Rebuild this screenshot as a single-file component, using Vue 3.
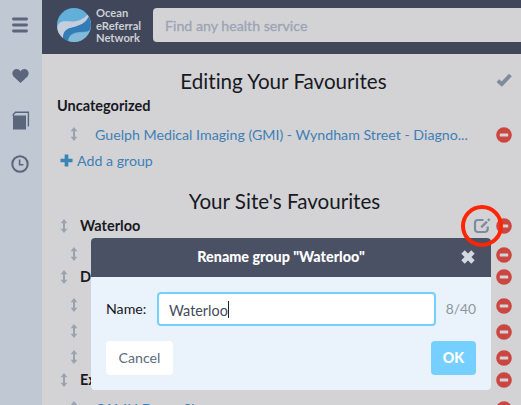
<script setup>
import { ref } from 'vue'

const name = ref('Waterloo')
const siteRows = [
  { type: 'group', label: 'Waterloo', edit: true },
  { type: 'item', label: '' },
  { type: 'group', label: 'Diagnostic Imaging' },
  { type: 'item', label: '' },
  { type: 'item', label: '' },
  { type: 'item', label: '' },
  { type: 'group', label: 'Example' },
  { type: 'item', label: 'CAMH Demo Site' },
]
</script>

<template>
  <div class="app">
    <nav class="sidebar">
      <svg class="nav-icon menu" viewBox="0 0 16 16"><path d="M1.5 2H14.5M1.5 8H14.5M1.5 14H14.5" stroke="currentColor" stroke-width="2.9" stroke-linecap="round" /></svg>
      <svg class="nav-icon heart" viewBox="0 0 18 16"><path d="M9 15.5 1.6 8.4C-.2 6.2.1 3.3 1.8 1.8 4-.2 7.4.5 9 3.2 10.6.5 14-.2 16.2 1.8 17.9 3.3 18.2 6.2 16.4 8.4Z" fill="currentColor" /></svg>
      <svg class="nav-icon book" viewBox="0 0 18 19"><path d="M1 4.5H14V18.5H1Z" fill="currentColor" /><path d="M1.3 5V3.5L3.5 1.2H16.4V15.5" fill="none" stroke="currentColor" stroke-width="1.4" /></svg>
      <svg class="nav-icon clock" viewBox="0 0 18 18"><circle cx="9" cy="9" r="7.7" fill="none" stroke="currentColor" stroke-width="2" /><path d="M8.6 4.5V9.7H12.5" fill="none" stroke="currentColor" stroke-width="1.6" /></svg>
    </nav>

    <div class="page">
      <header class="topbar">
        <svg class="logo" viewBox="0 0 34 34">
          <circle cx="17" cy="17" r="17" fill="#62afda" />
          <path d="M.2 19C3 11 9 14 17 13.5 24 13 28 9 30.5 6.800 34 11 34.5 17 33.2 22 28 17 21 19 15 20 9 21 6.5 24 6 30 2 27 .2 23 .2 19Z" fill="#c5cedd" />
          <path d="M6 30C6 23 10 20.5 15 19.5 23 17.5 29 15 31.5 8.5 34 12 34.5 17 33.4 21.5 30 25 25 23 19 24.5 13 26 11 29 11.5 33 9.5 32.4 7.5 31.5 6 30Z" fill="#337cb5" />
          <path d="M11.5 33C11.5 29 14 26.5 19 25.5 25 24 30 26 33.2 21.8 30 32 20 36 11.5 33Z" fill="#84b9d8" />
        </svg>
        <div class="brand">Ocean<br />eReferral<br />Network</div>
        <div class="search">Find any health service</div>
      </header>

      <main class="content">
        <div class="title-row">
          <h1>Editing Your Favourites</h1>
          <svg class="check" viewBox="0 0 16 14"><path d="M1.8 7.7 5.8 11 14.4 2" fill="none" stroke="#7f8b9c" stroke-width="3.9" /></svg>
        </div>
        <div class="row group uncategorized"><span class="label">Uncategorized</span></div>
        <div class="row item">
          <svg class="drag" viewBox="0 0 8 14"><path d="M4 2.5V11.5" stroke="currentColor" stroke-width="2" /><path d="M4 0 7.4 4.2H.6ZM4 14 .6 9.8H7.4Z" fill="currentColor" /></svg>
          <a class="link">Guelph Medical Imaging (GMI) - Wyndham Street - Diagno...</a>
          <svg class="remove" viewBox="0 0 16 16"><circle cx="8" cy="8" r="7.8" fill="#cb4640" /><rect x="3.8" y="6.4" width="8.4" height="3.2" rx=".6" fill="#d3d3d5" /></svg>
        </div>
        <div class="add">
          <svg class="plus" viewBox="0 0 14 14"><path d="M7 .5V13.5M.5 7H13.5" stroke="#3a85b8" stroke-width="4" /></svg>
          <a class="link">Add a group</a>
        </div>

        <h1 class="site-title">Your Site's Favourites</h1>
        <div v-for="(row, i) in siteRows" :key="i" class="row" :class="row.type">
          <svg class="drag" viewBox="0 0 8 14"><path d="M4 2.5V11.5" stroke="currentColor" stroke-width="2" /><path d="M4 0 7.4 4.2H.6ZM4 14 .6 9.8H7.4Z" fill="currentColor" /></svg>
          <span :class="row.type === 'item' ? 'link' : 'label'">{{ row.label }}</span>
          <span v-if="row.edit" class="edit">
            <svg viewBox="0 0 18 16"><path d="M10.5 2H5Q2 2 2 5V11Q2 14 5 14H11.5Q14.7 14 14.7 11V8.5" fill="none" stroke="#7f8b9c" stroke-width="2.2" /><path d="M8.2 9.4 14 3.7" stroke="#7f8b9c" stroke-width="2.4" /><path d="M15 2.6 16.6 1" stroke="#7f8b9c" stroke-width="2.4" /></svg>
            <span class="highlight"></span>
          </span>
          <svg class="remove" viewBox="0 0 16 16"><circle cx="8" cy="8" r="7.8" fill="#cb4640" /><rect x="3.8" y="6.4" width="8.4" height="3.2" rx=".6" fill="#d3d3d5" /></svg>
        </div>
      </main>
    </div>

    <section class="dialog">
      <div class="dialog-head">
        <span class="dialog-title">Rename group "Waterloo"</span>
        <svg class="close" viewBox="0 0 14 14"><path d="M2 2 12 12M12 2 2 12" stroke="#d5dae2" stroke-width="4.8" /></svg>
      </div>
      <div class="dialog-body">
        <div class="field">
          <span class="field-label">Name:</span>
          <div class="input"><span>{{ name }}</span><i class="caret"></i></div>
          <span class="count">{{ name.length }}/40</span>
        </div>
        <div class="actions">
          <button class="btn cancel">Cancel</button>
          <button class="btn ok">OK</button>
        </div>
      </div>
    </section>
  </div>
</template>

<style>
body { margin: 0; overflow: hidden; }
</style>

<style scoped>
* { box-sizing: border-box; }
.app { position: relative; display: flex; width: 521px; height: 405px; overflow: hidden; background: #d3d3d5; font-family: Lato, sans-serif; font-size: 14.2px; font-variant-ligatures: none; color: #171923; }
.sidebar { width: 42px; flex: none; background: #c0c8d4; color: #5b657b; display: flex; flex-direction: column; align-items: center; padding-top: 17px; }
.nav-icon { display: block; }
.menu { width: 16px; height: 16px; margin-right: 2px; }
.heart { width: 17px; height: 16px; margin-top: 35px; margin-right: 1px; }
.book { width: 18px; height: 19px; margin-top: 27px; }
.clock { width: 18px; height: 18px; margin-top: 25px; margin-right: 2px; }
.page { flex: 1; min-width: 0; }
.topbar { height: 54px; background: #41475a; display: flex; align-items: flex-start; padding: 8px 0 0 15px; overflow: hidden; }
.logo { width: 34px; height: 34px; flex: none; }
.brand { width: 57px; height: 40px; flex: none; margin-left: 5px; margin-top: -1px; font-size: 11.2px; line-height: 12.5px; font-weight: 700; color: #cccfd5; }
.search { height: 34px; flex: 1; background: #d3d3d5; border-radius: 4px 0 0 4px; padding-left: 12px; line-height: 36px; color: #9aa4b5; -webkit-text-stroke: .3px #9aa4b5; white-space: nowrap; }
.content { padding: 13px 9px 0 15px; }
.title-row { display: flex; align-items: center; height: 28px; }
h1 { margin: 0; flex: 1; font-size: 20.6px; line-height: 28px; font-weight: 400; text-align: center; }
.title-row h1 { padding-left: 14px; }
.check { width: 16px; height: 14px; margin-bottom: 3px; }
.row { display: flex; align-items: center; white-space: nowrap; }
.group { height: 18px; margin-bottom: 7px; padding-left: 3px; font-weight: 700; font-size: 14.5px; }
.group .label { margin-top: -1px; }
.uncategorized { padding-left: 0; margin-top: 1px; margin-bottom: 8px; }
.uncategorized .label { margin-top: 1px; }
.item { height: 26px; padding-left: 13px; }
.drag { width: 8px; height: 14px; flex: none; color: #99a3b2; margin-bottom: 3px; }
.group .drag { margin-bottom: 1px; }
.group .drag + .label { margin-left: 12px; }
.item .link { margin-left: 17px; margin-bottom: 2px; }
.link { color: #3f7fb6; }
.remove { width: 16px; height: 16px; flex: none; margin-left: auto; }
.add { display: flex; align-items: center; height: 26px; padding-left: 3px; gap: 4px; }
.add .link { margin-bottom: 1px; }
.plus { width: 13px; height: 13px; margin-bottom: 1px; }
.site-title { height: 28px; margin: 13px 0 2px 0; }
.edit { position: relative; width: 18px; height: 16px; margin-left: auto; margin-right: 5px; }
.edit svg { display: block; width: 18px; height: 16px; }
.edit + .remove { margin-left: 0; }
.highlight { position: absolute; z-index: 4; left: -12px; top: -13px; width: 42px; height: 42px; border: 4px solid #fd2504; border-radius: 50%; }
.dialog { position: absolute; z-index: 2; left: 91px; top: 238px; width: 400px; height: 152px; border-radius: 4px; overflow: hidden; background: #eaf2fb; }
.dialog-head { position: relative; height: 39px; background: #4b5164; display: flex; align-items: center; justify-content: center; color: #fff; font-size: 14.35px; font-weight: 900; padding: 0 20px 2px 0; }
.close { position: absolute; right: 16px; top: 12px; width: 14px; height: 14px; }
.dialog-body { padding: 15px; }
.field { display: flex; align-items: center; height: 34px; }
.field-label { width: 51px; margin-top: -1px; }
.input { width: 279px; height: 34px; flex: none; border: 2px solid #75d0ff; border-radius: 4px; background: #fff; display: flex; align-items: center; padding: 2px 0 0 10px; color: #444b5c; font-size: 14.4px; }
.caret { width: 1px; height: 17px; background: #20232b; margin-top: -2px; }
.count { margin-left: auto; margin-top: -1px; color: #8d969f; font-size: 13.8px; }
.actions { display: flex; justify-content: space-between; margin-top: 15px; }
.btn { height: 34px; border: 0; border-radius: 4px; padding: 0; font: 400 14.2px/34px Lato, sans-serif; }
.cancel { width: 67px; background: #fff; color: #5d6b7c; }
.ok { width: 45px; background: #75d0ff; color: #fff; font-weight: 900; }
</style>
